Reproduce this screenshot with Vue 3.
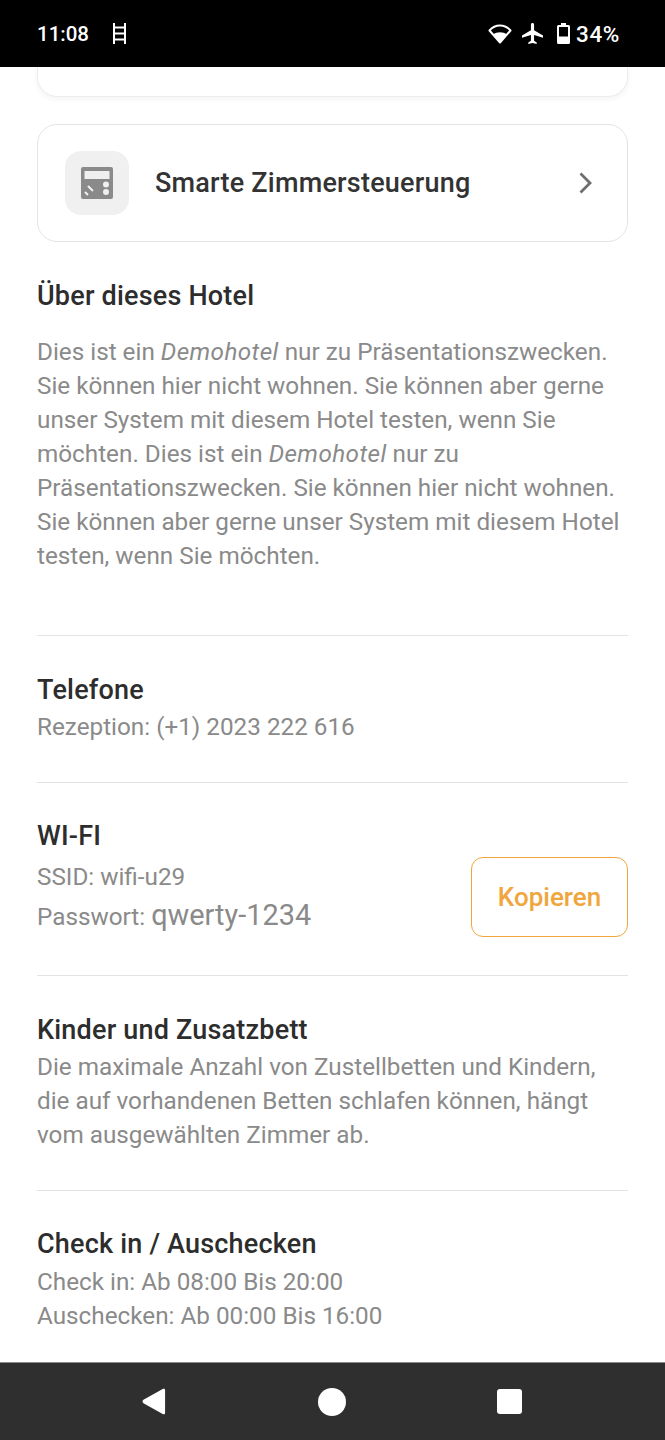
<script setup>
</script>

<template>
  <div class="screen">
    <header class="status">
      <div class="status-left">
        <span class="clock">11:08</span>
        <svg class="ladder" width="13" height="21" viewBox="0 0 13 21"><path d="M1 0v21M12 0v21M1 4.500h11M1 10.500h11M1 16.500h11" fill="none" stroke="#fff" stroke-width="2"/></svg>
      </div>
      <div class="status-right">
        <svg class="i-wifi" width="24" height="20" viewBox="0 0 24 20"><path d="M12 18.500 1.500 6.500C4.500 3 8 1.500 12 1.500S19.500 3 22.500 6.500Z" fill="none" stroke="#fff" stroke-width="2" stroke-linejoin="round"/><path d="M12 19 5 10.500C9 7.500 15 7.500 19 10.500Z" fill="#fff"/></svg>
        <svg class="i-plane" width="21" height="21" viewBox="2 2 20 20"><path fill="#fff" d="M22 16v-2l-8.500-5V3.500C13.500 2.670 12.830 2 12 2s-1.500.67-1.500 1.500V9L2 14v2l8.500-2.500V19L8 20.500V22l4-1 4 1v-1.500L13.500 19v-5.500z"/></svg>
        <svg class="i-batt" width="13" height="21" viewBox="0 0 13 21"><path fill="#fff" fill-rule="evenodd" d="M4 0h5v2h2.500A1.500 1.500 0 0 1 13 3.500v16a1.500 1.500 0 0 1-1.500 1.500h-10A1.500 1.500 0 0 1 0 19.500v-16A1.500 1.500 0 0 1 1.500 2H4ZM2 4v9.500h9V4Z"/></svg>
        <span class="pct">34%</span>
      </div>
    </header>

    <main class="content">
      <div class="card-stub"></div>

      <div class="room-card">
        <div class="room-icon">
          <svg width="34" height="34" viewBox="0 0 34 34">
            <path fill="#8a8a8a" fill-rule="evenodd" d="M3 1h28a2 2 0 0 1 2 2v28a2 2 0 0 1-2 2H3a2 2 0 0 1-2-2V3a2 2 0 0 1 2-2Zm1.500 4v8h25V5Z"/>
            <circle cx="26" cy="18.500" r="3" fill="#f0f0f0"/>
            <circle cx="26" cy="26" r="3" fill="#f0f0f0"/>
            <path d="M8 20l5 5M5 26l3 3" stroke="#f0f0f0" stroke-width="2" fill="none"/>
          </svg>
        </div>
        <span class="room-label">Smarte Zimmersteuerung</span>
        <svg class="chevron" width="16" height="24" viewBox="0 0 16 24"><path d="M2.500 2.500 12 12l-9.500 9.500" fill="none" stroke="#6e6e6e" stroke-width="2.800"/></svg>
      </div>

      <section class="about">
        <h2>Über dieses Hotel</h2>
        <p>Dies ist ein <em>Demohotel</em> nur zu Präsentationszwecken. Sie können hier nicht wohnen. Sie können aber gerne unser System mit diesem Hotel testen, wenn Sie möchten. Dies ist ein <em>Demohotel</em> nur zu Präsentationszwecken. Sie können hier nicht wohnen. Sie können aber gerne unser System mit diesem Hotel testen, wenn Sie möchten.</p>
      </section>

      <section class="info phones">
        <h2>Telefone</h2>
        <p>Rezeption: (+1) 2023 222 616</p>
      </section>

      <section class="info wifi">
        <div class="wifi-text">
          <h2>WI-FI</h2>
          <div class="ssid">SSID: wifi-u29</div>
          <div class="pw">Passwort: <span>qwerty-1234</span></div>
        </div>
        <button class="copy">Kopieren</button>
      </section>

      <section class="info kids">
        <h2>Kinder und Zusatzbett</h2>
        <p>Die maximale Anzahl von Zustellbetten und Kindern, die auf vorhandenen Betten schlafen können, hängt vom ausgewählten Zimmer ab.</p>
      </section>

      <section class="info checkin">
        <h2>Check in / Auschecken</h2>
        <p>Check in: Ab 08:00 Bis 20:00<br>Auschecken: Ab 00:00 Bis 16:00</p>
      </section>
    </main>

    <footer class="nav">
      <svg width="25" height="27" viewBox="0 0 26 28"><path fill="#fff" d="M1.500 12.300 22 .8c1-.5 2 .1 2 1.200v24c0 1.100-1 1.700-2 1.200L1.500 15.700c-1.300-.8-1.300-2.600 0-3.400Z"/></svg>
      <span class="dot"></span>
      <span class="sq"></span>
    </footer>
  </div>
</template>

<style>
html, body { margin: 0; background: #fff; }
</style>

<style scoped>
.screen { width: 665px; height: 1440px; display: flex; flex-direction: column; font-family: Roboto, "Liberation Sans", sans-serif; background: #fff; overflow: hidden; }
.status { height: 67px; flex: none; background: #000; color: #fff; display: flex; align-items: center; justify-content: space-between; padding: 0 45px 0 37px; font-size: 20.500px; }
.status-left { display: flex; align-items: center; gap: 25px; }
.status-right { display: flex; align-items: center; }
.clock { font-weight: 500; width: 51px; white-space: nowrap; }
.pct { font-weight: 500; font-size: 22.500px; margin-left: 6px; letter-spacing: .6px; }
.i-plane { margin-left: 10px; }
.i-batt { margin-left: 14px; }
.content { flex: 1; min-height: 0; padding: 0 37px; overflow: hidden; color: #2d2d2d; }
.card-stub { height: 30px; margin-top: -1px; border: 1px solid #ececec; border-top: 0; border-radius: 0 0 20px 20px; box-shadow: 0 2px 6px rgba(0,0,0,.05); }
.room-card { margin-top: 27px; height: 118px; box-sizing: border-box; border: 1px solid #e4e4e4; border-radius: 20px; display: flex; align-items: center; padding: 0 33px 0 27px; }
.room-icon { width: 64px; height: 64px; border-radius: 16px; background: #f0f0f0; display: flex; align-items: center; justify-content: center; }
.room-label { margin-left: 26px; flex: 1; font-size: 27px; letter-spacing: .22px; font-weight: 500; color: #333; }
.about { margin-top: 37px; padding-bottom: 62px; }
h2 { margin: 0; font-size: 27px; letter-spacing: .2px; font-weight: 500; line-height: 34px; color: #2d2d2d; }
p { margin: 0; }
.about p { margin-top: 22px; }
em { letter-spacing: .4px; }
p, .ssid, .pw { font-size: 24.280px; line-height: 34px; color: #8a8a8a; }
.info { border-top: 1px solid #e2e2e2; }
.phones { padding: 37px 0 38px; }
.phones p, .kids p { margin-top: 3px; }
.checkin p { margin-top: 4px; }
.wifi { padding: 36px 0 38px; display: flex; justify-content: space-between; align-items: flex-end; }
.ssid { line-height: 38px; margin-top: 5px; }
.pw { line-height: 40px; height: 42px; margin-top: -1px; }
.pw span { font-size: 28.900px; }
.copy { width: 157px; height: 80px; background: #fff; border: 1.500px solid #f0a63c; border-radius: 12px; color: #f0a63c; font: 500 26px Roboto, sans-serif; padding: 0; }
.kids { padding: 37px 0 38px; }
.checkin { padding: 36px 0 0; }
.nav { height: 78px; flex: none; background: #2f2f2f; border-top: 1px solid #8a8a8a; box-sizing: border-box; display: flex; align-items: center; }
.nav svg { margin-left: 142px; }
.dot { width: 28px; height: 28px; border-radius: 50%; background: #fff; margin-left: 151px; }
.sq { width: 25px; height: 25px; border-radius: 3px; background: #fff; margin-left: 151px; }
</style>
